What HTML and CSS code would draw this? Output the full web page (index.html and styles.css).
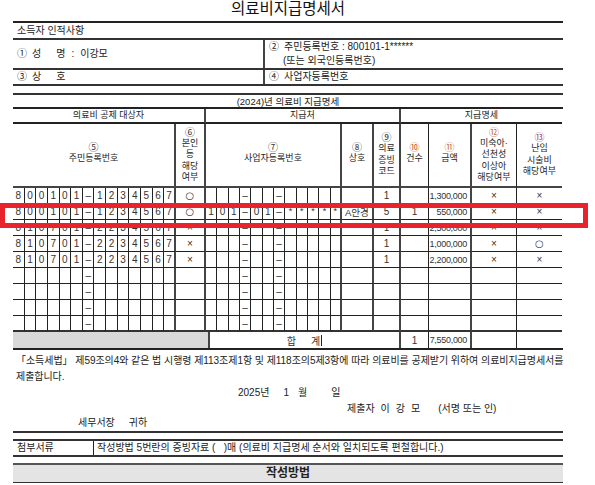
FILE: index.html
```html
<!DOCTYPE html>
<html lang="ko">
<head>
<meta charset="utf-8">
<title>의료비지급명세서</title>
<link rel="stylesheet" href="styles.css">
</head>
<body>
<div class="page">
  <h1 class="title">의료비지급명세서</h1>

  <section class="info">
    <div class="info-head">소득자 인적사항</div>
    <div class="info-row tall">
      <div class="cell left"><span class="cn">①</span><span class="w1">성</span><span class="w2">명</span><span class="colon">:</span><span>이강모</span></div>
      <div class="cell right"><div><span class="cn">②</span>주민등록번호&nbsp;:&nbsp;800101-1******</div><div class="ind">(또는&nbsp;외국인등록번호)</div></div>
    </div>
    <div class="info-row">
      <div class="cell left"><span class="cn">③</span><span class="w1">상</span><span>호</span></div>
      <div class="cell right"><div><span class="cn">④</span>사업자등록번호</div></div>
    </div>
  </section>

  <div class="year">(2024)년&nbsp;의료비&nbsp;지급명세</div>

  <section class="table">
    <div class="thead">
      <div class="g1">의료비&nbsp;공제&nbsp;대상자</div>
      <div class="g2">지급처</div>
      <div class="g3">지급명세</div>
      <div class="c5 two"><span class="n">⑤</span><span>주민등록번호</span></div>
      <div class="c6"><span class="n">⑥</span><span>본인</span><span>등</span><span>해당</span><span>여부</span></div>
      <div class="c7 two"><span class="n">⑦</span><span>사업자등록번호</span></div>
      <div class="c8 two"><span class="n">⑧</span><span>상호</span></div>
      <div class="c9"><span class="n">⑨</span><span>의료</span><span>증빙</span><span>코드</span></div>
      <div class="c10 two"><span class="n o">⑩</span><span>건수</span></div>
      <div class="c11 two"><span class="n o">⑪</span><span>금액</span></div>
      <div class="c12"><span class="n o">⑫</span><span>미숙아·</span><span>선천성</span><span>이상아</span><span>해당여부</span></div>
      <div class="c13"><span class="n p">⑬</span><span>난임</span><span>시술비</span><span>해당여부</span></div>
    </div>

    <div class="tr"><span>8</span><span>0</span><span>0</span><span>1</span><span>0</span><span>1</span><span>–</span><span>1</span><span>2</span><span>3</span><span>4</span><span>5</span><span>6</span><span>7</span><span class="sym">○</span><span></span><span></span><span></span><span>–</span><span></span><span></span><span>–</span><span></span><span></span><span></span><span></span><span></span><span></span><span>1</span><span></span><span class="amt">1,300,000</span><span>×</span><span>×</span></div>
    <div class="tr"><span>8</span><span>0</span><span>0</span><span>1</span><span>0</span><span>1</span><span>–</span><span>1</span><span>2</span><span>3</span><span>4</span><span>5</span><span>6</span><span>7</span><span class="sym">○</span><span>1</span><span>0</span><span>1</span><span>–</span><span>0</span><span>1</span><span>–</span><span class="ast">*</span><span class="ast">*</span><span class="ast">*</span><span class="ast">*</span><span class="ast">*</span><span class="name">A안경</span><span>5</span><span>1</span><span class="amt">550,000</span><span>×</span><span>×</span></div>
    <div class="tr"><span>8</span><span>1</span><span>0</span><span>7</span><span>0</span><span>1</span><span>–</span><span>2</span><span>2</span><span>3</span><span>4</span><span>5</span><span>6</span><span>7</span><span>×</span><span></span><span></span><span></span><span>–</span><span></span><span></span><span>–</span><span></span><span></span><span></span><span></span><span></span><span></span><span>1</span><span></span><span class="amt">2,500,000</span><span>×</span><span>×</span></div>
    <div class="tr"><span>8</span><span>1</span><span>0</span><span>7</span><span>0</span><span>1</span><span>–</span><span>2</span><span>2</span><span>3</span><span>4</span><span>5</span><span>6</span><span>7</span><span>×</span><span></span><span></span><span></span><span>–</span><span></span><span></span><span>–</span><span></span><span></span><span></span><span></span><span></span><span></span><span>1</span><span></span><span class="amt">1,000,000</span><span>×</span><span class="sym">○</span></div>
    <div class="tr"><span>8</span><span>1</span><span>0</span><span>7</span><span>0</span><span>1</span><span>–</span><span>2</span><span>2</span><span>3</span><span>4</span><span>5</span><span>6</span><span>7</span><span>×</span><span></span><span></span><span></span><span>–</span><span></span><span></span><span>–</span><span></span><span></span><span></span><span></span><span></span><span></span><span>1</span><span></span><span class="amt">2,200,000</span><span>×</span><span>×</span></div>
    <div class="tr"><span></span><span></span><span></span><span></span><span></span><span></span><span>–</span><span></span><span></span><span></span><span></span><span></span><span></span><span></span><span></span><span></span><span></span><span></span><span>–</span><span></span><span></span><span>–</span><span></span><span></span><span></span><span></span><span></span><span></span><span></span><span></span><span></span><span></span><span></span></div>
    <div class="tr"><span></span><span></span><span></span><span></span><span></span><span></span><span>–</span><span></span><span></span><span></span><span></span><span></span><span></span><span></span><span></span><span></span><span></span><span></span><span>–</span><span></span><span></span><span>–</span><span></span><span></span><span></span><span></span><span></span><span></span><span></span><span></span><span></span><span></span><span></span></div>
    <div class="tr"><span></span><span></span><span></span><span></span><span></span><span></span><span>–</span><span></span><span></span><span></span><span></span><span></span><span></span><span></span><span></span><span></span><span></span><span></span><span>–</span><span></span><span></span><span>–</span><span></span><span></span><span></span><span></span><span></span><span></span><span></span><span></span><span></span><span></span><span></span></div>
    <div class="tr last"><span></span><span></span><span></span><span></span><span></span><span></span><span>–</span><span></span><span></span><span></span><span></span><span></span><span></span><span></span><span></span><span></span><span></span><span></span><span>–</span><span></span><span></span><span>–</span><span></span><span></span><span></span><span></span><span></span><span></span><span></span><span></span><span></span><span></span><span></span></div>

    <div class="sum"><span class="shade"></span><span class="label">합<span class="gapw"></span>계<span class="caret"></span></span><span>1</span><span class="amt">7,550,000</span><span></span><span></span></div>
  </section>

  <p class="decl">「소득세법」 제59조의4와 같은 법 시행령 제113조제1항 및 제118조의5제3항에 따라 의료비를 공제받기 위하여 의료비지급명세서를<br>제출합니다.</p>

  <div class="date"><span>2025년</span><span class="mo">1</span><span class="mw">월</span><span class="dw">일</span></div>
  <div class="sign"><span>제출자</span><span class="nm">이</span><span class="nm">강</span><span class="nm">모</span><span class="sg">(서명 또는 인)</span></div>
  <div class="to"><span>세무서장</span><span class="gw">귀하</span></div>

  <div class="rule"></div>

  <div class="attach"><div class="k">첨부서류</div><div class="v">작성방법 5번란의 증빙자료 (&nbsp;&nbsp;&nbsp;)매 (의료비 지급명세 순서와 일치되도록 편철합니다.)</div></div>

  <div class="howto">작성방법</div>
</div>

<div class="highlight"></div>
</body>
</html>
```

FILE: styles.css
```css
* { box-sizing: border-box; margin: 0; padding: 0; }

body {
  margin: 0;
  background: #fff;
  color: #222;
  font-family: "Liberation Sans", "Noto Sans CJK KR", sans-serif;
  font-size: 10px;
}

.page {
  width: 550px;
  margin-left: 13px;
}

.title {
  height: 21px;
  font-size: 15.5px;
  line-height: 17px;
  font-weight: normal;
  text-align: center;
  color: #111;
}

/* personal info */
.info { border-top: 2px solid #222; }

.info-head {
  height: 17px;
  line-height: 15px;
  padding-left: 4px;
  border-bottom: 2px solid #333;
}

.info-row {
  display: flex;
  height: 16px;
  border-bottom: 2px solid #333;
}
.info-row.tall { height: 30px; }

.cell {
  display: flex;
  flex-direction: column;
  justify-content: center;
  line-height: 14px;
  white-space: nowrap;
}
.cell.left {
  width: 252px;
  padding-left: 4px;
  border-right: 2px solid #444;
  flex-direction: row;
  align-items: center;
  justify-content: flex-start;
}
.cell.right { padding-left: 4px; }
.cn { margin-right: 5px; }
.w1 { margin-right: 15px; }
.colon { margin: 0 6px 0 6px; }
.ind { padding-left: 14px; }

.year {
  margin-top: 7px;
  border-top: 2px solid #333;
  height: 14px;
  line-height: 14px;
  text-align: center;
  font-size: 9.5px;
}

/* main table */
.table {
  --cols: repeat(14, 11.643px) 30px repeat(12, 11.333px) 32px 27px 28px 43px 45px 45px;
  border-top: 2px solid #222;
  border-bottom: 2px solid #222;
}

.thead {
  display: grid;
  grid-template-columns: var(--cols);
  grid-template-rows: 15px 64px;
  font-size: 9px;
}
.thead > div {
  display: flex;
  flex-direction: column;
  align-items: center;
  justify-content: center;
  text-align: center;
  line-height: 11.5px;
  border-right: 1px solid #222;
  border-bottom: 1px solid #222;
  white-space: nowrap;
}
.thead .g1 { grid-column: span 15; border-right: 2px solid #444; border-bottom-width: 2px; }
.thead .g2 { grid-column: span 14; border-right: 2px solid #444; border-bottom-width: 2px; }
.thead .g3 { grid-column: span 4; border-right: 0; border-bottom-width: 2px; }
.thead .c5 { grid-column: span 14; border-right: 2px solid #444; }
.thead .c6 { border-right: 2px solid #444; }
.thead .c7 { grid-column: span 12; border-right: 2px solid #444; }
.thead .c8, .thead .c9, .thead .c11 { border-right: 2px solid #444; }
.thead .c13 { border-right: 0; }
.thead .c5, .thead .c6, .thead .c7, .thead .c8, .thead .c9,
.thead .c10, .thead .c11, .thead .c12, .thead .c13 { border-bottom: 2px solid #444; }
.thead .two { padding-bottom: 4px; }
.thead .n { line-height: 11px; font-size: 10px; color: #333; }
.thead .n.o { color: #c0621f; }
.thead .n.p { color: #a03c74; }

.tr {
  display: grid;
  grid-template-columns: var(--cols);
  height: 16px;
}
.tr > span {
  display: flex;
  align-items: center;
  justify-content: center;
  border-right: 1px solid #222;
  border-bottom: 1px solid #222;
  color: #333;
  font-size: 10px;
  white-space: nowrap;
}
.tr > span:nth-child(14),
.tr > span:nth-child(15),
.tr > span:nth-child(27),
.tr > span:nth-child(28),
.tr > span:nth-child(29),
.tr > span:nth-child(31) { border-right: 2px solid #444; }
.tr > span:last-child { border-right: 0; }
.tr.last > span { border-bottom: 2px solid #333; }

.tr .sym { font-size: 10px; font-family: "DejaVu Sans", sans-serif; }
.tr .ast { font-size: 9px; align-items: flex-start; padding-top: 2px; }
.tr .name { font-size: 9.5px; }
.amt {
  justify-content: flex-end !important;
  padding-right: 3px;
  font-size: 9px !important;
  letter-spacing: -0.3px;
}

.sum {
  display: grid;
  grid-template-columns: 197px 191px 28px 43px 45px 45px;
  height: 16px;
}
.sum > span {
  display: flex;
  align-items: center;
  justify-content: center;
  border-right: 1px solid #222;
  color: #333;
}
.sum > span:last-child { border-right: 0; }
.sum .shade { background: #d9d9d9; border-right: 2px solid #444; }
.sum .label, .sum > span:nth-child(4) { border-right: 2px solid #444; }
.gapw { display: inline-block; width: 15px; }
.caret { display: inline-block; width: 1px; height: 11px; background: #222; margin-left: 1px; }

/* declaration */
.decl {
  margin-top: 3px;
  padding-left: 3px;
  font-size: 10px;
  line-height: 16px;
  letter-spacing: -0.05px;
  white-space: nowrap;
}

.date {
  height: 16px;
  line-height: 16px;
  padding-left: 225px;
  white-space: nowrap;
}
.date .mo { margin-left: 14px; }
.date .mw { margin-left: 9px; }
.date .dw { margin-left: 24px; }

.sign {
  height: 15px;
  line-height: 15px;
  padding-left: 334px;
  white-space: nowrap;
}
.sign .nm { margin-left: 6px; }
.sign .sg { margin-left: 18px; }

.to {
  height: 14px;
  line-height: 14px;
  padding-left: 65px;
}
.to .gw { margin-left: 14px; }

.rule {
  margin-top: 1px;
  border-top: 2px solid #333;
}

.attach {
  display: flex;
  margin-top: 6px;
  height: 18px;
  border-top: 2px solid #333;
  border-bottom: 2px solid #333;
  line-height: 14px;
  white-space: nowrap;
}
.attach .k { width: 81px; padding-left: 4px; border-right: 1px solid #222; }
.attach .v { padding-left: 3px; }

.howto {
  margin-top: 6px;
  height: 20px;
  line-height: 17px;
  border-top: 2px solid #555;
  border-bottom: 1px solid #333;
  background: #e4e4e4;
  text-align: center;
  font-size: 12px;
  font-weight: bold;
}

/* annotation overlay */
.highlight {
  position: absolute;
  left: 0;
  top: 203px;
  width: 588px;
  height: 25px;
  border: 5px solid #e8232b;
  pointer-events: none;
}
```
